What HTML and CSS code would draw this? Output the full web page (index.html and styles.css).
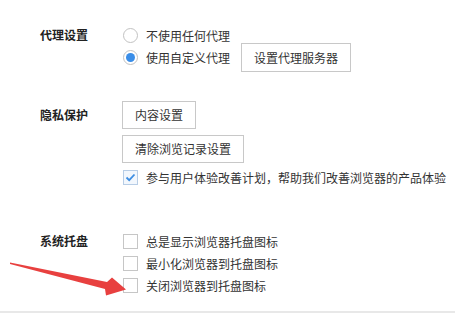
FILE: index.html
```html
<!DOCTYPE html>
<html lang="zh-CN">
<head>
<meta charset="utf-8">
<link rel="stylesheet" href="styles.css">
</head>
<body>
<div class="page">
  <section class="sec sec-proxy">
    <div class="label l-proxy">代理设置</div>
    <div class="opts">
      <div class="row r-first"><span class="radio"></span><span>不使用任何代理</span></div>
      <div class="row r-btn"><span class="radio on"></span><span>使用自定义代理</span><button class="btn btn-gap">设置代理服务器</button></div>
    </div>
  </section>
  <section class="sec sec-privacy">
    <div class="label l-privacy">隐私保护</div>
    <div class="opts gap6">
      <div><button class="btn">内容设置</button></div>
      <div><button class="btn">清除浏览记录设置</button></div>
      <div class="row r-first"><span class="check on"><svg width="13" height="13" viewBox="0 0 13 13"><path d="M2.5 6.5 L5.2 9.2 L10.5 3.5" fill="none" stroke="#3d8ee3" stroke-width="1.8"/></svg></span><span>参与用户体验改善计划，帮助我们改善浏览器的产品体验</span></div>
    </div>
  </section>
  <section class="sec sec-tray">
    <div class="label l-tray">系统托盘</div>
    <div class="opts">
      <div class="row r-tray"><span class="check"></span><span>总是显示浏览器托盘图标</span></div>
      <div class="row r-tray"><span class="check"></span><span>最小化浏览器到托盘图标</span></div>
      <div class="row r-tray"><span class="check"></span><span>关闭浏览器到托盘图标</span></div>
    </div>
  </section>
  <div class="bottom-line"></div>
</div>
<svg class="arrow" width="455" height="313" viewBox="0 0 455 313">
  <polygon points="10,262.5 107,282 112,277.5 126,289.5 106,295.5 105,289 10,264" fill="#e8403f"/>
</svg>
</body>
</html>
```
FILE: styles.css
```css
html, body {
  margin: 0;
  padding: 0;
  background: #ffffff;
}
body {
  font-family: "Noto Sans CJK SC", "Noto Sans", sans-serif;
  font-size: 12px;
  color: #333333;
  width: 455px;
  height: 313px;
  overflow: hidden;
  position: relative;
}
.page {
  padding-left: 40px;
  padding-top: 27px;
}
.sec {
  display: grid;
  grid-template-columns: 82px 1fr;
}
.sec-privacy { margin-top: 29px; }
.sec-tray { margin-top: 45px; }
.label {
  font-weight: bold;
  color: #222222;
  font-size: 12px;
}
.l-proxy { line-height: 16px; }
.l-privacy { line-height: 28px; }
.l-tray { line-height: 22px; }
.opts {
  display: flex;
  flex-direction: column;
}
.gap6 { gap: 6px; }
.row {
  display: flex;
  align-items: center;
  white-space: nowrap;
}
.r-first { height: 16px; }
.r-btn { height: 29px; }
.r-tray { height: 22px; }
.radio {
  box-sizing: border-box;
  width: 15px;
  height: 15px;
  border: 1px solid #c2c2c2;
  border-radius: 50%;
  margin-left: 1px;
  margin-right: 8px;
  background: #ffffff;
  display: flex;
  align-items: center;
  justify-content: center;
  flex: none;
}
.radio.on::after {
  content: "";
  width: 9px;
  height: 9px;
  border-radius: 50%;
  background: #3a8ee8;
}
.check {
  box-sizing: border-box;
  width: 15px;
  height: 15px;
  border: 1px solid #c6c6c6;
  margin-left: 1px;
  margin-right: 8px;
  background: #ffffff;
  display: flex;
  align-items: center;
  justify-content: center;
  flex: none;
}
.check.on {
  border-color: #b7cde6;
  background: #f2f7fd;
}
.btn {
  box-sizing: border-box;
  height: 28px;
  padding: 0 12px;
  border: 1px solid #c8c8c8;
  background: #ffffff;
  font-family: "Noto Sans CJK SC", "Noto Sans", sans-serif;
  font-size: 12px;
  color: #333333;
  line-height: 26px;
  margin: 0;
}
.btn-gap {
  margin-left: 11px;
  height: 29px;
  padding: 0 12px;
}
.bottom-line {
  margin-top: 15px;
  margin-left: -40px;
  height: 2px;
  background: #e8e8e8;
}
.arrow {
  position: absolute;
  left: 0;
  top: 0;
  pointer-events: none;
}
```
